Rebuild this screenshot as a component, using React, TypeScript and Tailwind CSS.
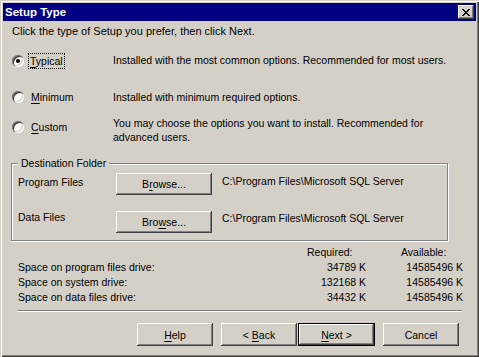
import type { ReactNode } from 'react';

const Key = ({ children }: { children: ReactNode }) => <span className="underline underline-offset-[2px]">{children}</span>;

const Radio = ({ checked }: { checked?: boolean }) => (
  <span className="flex h-3 w-3 shrink-0 items-center justify-center rounded-full bg-white shadow-[inset_1px_1px_0_#808080,inset_2px_2px_0_#404040,inset_-1px_-1px_0_#fff,inset_-2px_-2px_0_#d4d0c8]">
    {checked && <span className="h-1 w-1 rounded-full bg-black" />}
  </span>
);

const BEVEL =
  'shadow-[inset_-1px_-1px_0_#404040,inset_1px_1px_0_#fff,inset_-2px_-2px_0_#808080,inset_2px_2px_0_#d4d0c8]';

const Button = ({ children, className }: { children: ReactNode; className: string }) => (
  <button
    className={`flex shrink-0 items-center justify-center bg-[#d4d0c8] pt-[1px] text-[10.5px] leading-[13px] text-black ${BEVEL} ${className}`}
  >
    <span className="whitespace-pre">{children}</span>
  </button>
);

export default function App() {
  return (
    <div className="flex h-[357px] w-[479px] flex-col bg-[#d4d0c8] p-[3px] font-['Liberation_Sans',Arial,sans-serif] text-[10.5px] leading-[13px] text-black shadow-[inset_1px_1px_0_#d4d0c8,inset_2px_2px_0_#fff,inset_-1px_-1px_0_#404040,inset_-2px_-2px_0_#808080]">
      {/* Title bar */}
      <div className="flex h-[18px] shrink-0 items-center justify-between bg-[#000080] pl-[2px] pr-[2px]">
        <span className="text-[11.5px] font-bold text-white">Setup Type</span>
        <button className={`flex h-[14px] w-[16px] items-center justify-center bg-[#d4d0c8] ${BEVEL}`}>
          <svg width="8" height="7" viewBox="0 0 8 7" shapeRendering="crispEdges">
            <path d="M0 0h2v1h1v1h2v-1h1v-1h2v1h-1v1h-1v1h-1v1h1v1h1v1h1v1h-2v-1h-1v-1h-2v1h-1v1h-2v-1h1v-1h1v-1h1v-1h-1v-1h-1v-1h-1z" fill="#000" />
          </svg>
        </button>
      </div>

      <p className="ml-[9px] mt-[4px] text-[11px]">Click the type of Setup you prefer, then click Next.</p>

      {/* Setup type options */}
      <div className="ml-[9px] mt-[14px] flex h-[18px] items-center">
        <div className="flex w-[101px] items-center gap-[4px]">
          <Radio checked />
          <span className="border border-dotted border-black px-[1px] leading-[14px]">
            <Key>T</Key>ypical
          </span>
        </div>
        <span className="-mt-[1px]">Installed with the most common options. Recommended for most users.</span>
      </div>

      <div className="ml-[9px] mt-[18px] flex h-[18px] items-center">
        <div className="flex w-[101px] items-center gap-[6px]">
          <Radio />
          <span className="pl-[1px]">
            <Key>M</Key>inimum
          </span>
        </div>
        <span>Installed with minimum required options.</span>
      </div>

      <div className="ml-[9px] mt-[10px] flex items-start">
        <div className="mt-[2px] flex h-[18px] w-[101px] items-center gap-[6px]">
          <Radio />
          <span className="pl-[1px]">
            <Key>C</Key>ustom
          </span>
        </div>
        <p className="w-[330px] leading-[14px]">
          You may choose the options you want to install. Recommended for advanced users.
        </p>
      </div>

      {/* Destination folder group */}
      <fieldset className="ml-[8px] mt-[13px] w-[437px] border border-[#808080] pb-[7px] shadow-[inset_1px_1px_0_#fff,1px_1px_0_#fff]">
        <legend className="ml-[6px] bg-[#d4d0c8] px-[3px] leading-[13px]">Destination Folder</legend>
        <div className="mt-[3px] flex h-[22px] items-start pl-[6px]">
          <span className="mt-[3px] w-[98px]">Program Files</span>
          <Button className="h-[22px] w-[96px]">
            B<Key>r</Key>owse...
          </Button>
          <span className="ml-[10px] mt-[2px]">C:\Program Files\Microsoft SQL Server</span>
        </div>
        <div className="mt-[16px] flex h-[22px] items-start pl-[6px]">
          <span className="w-[98px]">Data Files</span>
          <Button className="h-[22px] w-[96px]">
            Bro<Key>w</Key>se...
          </Button>
          <span className="ml-[10px] mt-[1px]">C:\Program Files\Microsoft SQL Server</span>
        </div>
      </fieldset>

      {/* Disk space */}
      <div className="ml-[15px] mt-[4px] grid grid-cols-[289px_59px_97px] leading-[15px]">
        <span />
        <span>Required:</span>
        <span className="pl-[35px]">Available:</span>
        <span>Space on program files drive:</span>
        <span className="whitespace-nowrap text-right">34789 K</span>
        <span className="whitespace-nowrap text-right">14585496 K</span>
        <span>Space on system drive:</span>
        <span className="whitespace-nowrap text-right">132168 K</span>
        <span className="whitespace-nowrap text-right">14585496 K</span>
        <span>Space on data files drive:</span>
        <span className="whitespace-nowrap text-right">34432 K</span>
        <span className="whitespace-nowrap text-right">14585496 K</span>
      </div>

      <div className="ml-[14px] mt-[5px] h-[2px] w-[445px] border-t border-b border-t-[#808080] border-b-white" />

      {/* Buttons */}
      <div className="ml-[134px] mt-[11px] flex">
        <Button className="h-[23px] w-[76px]">
          <Key>H</Key>elp
        </Button>
        <Button className="ml-[8px] h-[23px] w-[76px]">
          {'< '}
          <Key>B</Key>ack
        </Button>
        <Button className="ml-[1px] h-[23px] w-[77px] border border-black">
          <Key>N</Key>
          {'ext >'}
        </Button>
        <Button className="ml-[8px] h-[23px] w-[76px]">Cancel</Button>
      </div>
    </div>
  );
}
